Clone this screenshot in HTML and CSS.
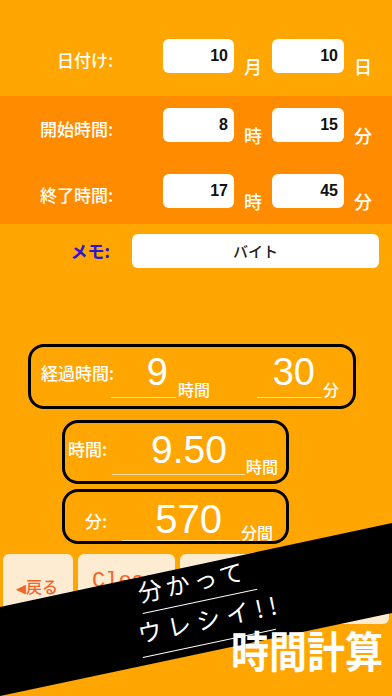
FILE: index.html
```html
<!DOCTYPE html>
<html lang="ja">
<head>
<meta charset="utf-8">
<title>時間計算</title>
<link rel="stylesheet" href="styles.css">
</head>
<body>
<div class="screen">
  <section class="group first">
    <div class="row">
      <div class="label">日付け:</div>
      <div class="box b1">10</div>
      <div class="unit">月</div>
      <div class="box b2">10</div>
      <div class="unit">日</div>
    </div>
  </section>
  <section class="group band">
    <div class="row">
      <div class="label">開始時間:</div>
      <div class="box b1">8</div>
      <div class="unit">時</div>
      <div class="box b2">15</div>
      <div class="unit">分</div>
    </div>
    <div class="row">
      <div class="label">終了時間:</div>
      <div class="box b1">17</div>
      <div class="unit">時</div>
      <div class="box b2">45</div>
      <div class="unit">分</div>
    </div>
  </section>
  <div class="memo-row">
    <div class="memo-label">メモ:</div>
    <div class="memo-box">バイト</div>
  </div>

  <div class="results">
    <div class="result r1">
      <div class="rlabel">経過時間:</div>
      <div class="field f1">9</div>
      <div class="runit u1">時間</div>
      <div class="field f2">30</div>
      <div class="runit u2">分</div>
    </div>
    <div class="result r2">
      <div class="rlabel">時間:</div>
      <div class="field f3">9.50</div>
      <div class="runit">時間</div>
    </div>
    <div class="result r3">
      <div class="rlabel">分:</div>
      <div class="field f4">570</div>
      <div class="runit">分間</div>
    </div>
  </div>

  <div class="buttons">
    <div class="btn back"><span class="tri">◀</span>戻る</div>
    <div class="btn clear">Clear</div>
    <div class="btn third"></div>
    <div class="btn fourth"></div>
  </div>

  <div class="stripe"></div>
  <div class="catch">
    <div class="l1">分かって</div>
    <div class="l2">ウレシイ!!</div>
  </div>
  <div class="title">時間計算</div>
</div>
</body>
</html>
```

FILE: styles.css
```css
html, body {
  margin: 0;
  padding: 0;
}
body {
  background: #ffa602;
  font-family: "Noto Sans CJK JP", "Noto Sans", sans-serif;
}
.screen {
  position: relative;
  width: 392px;
  height: 696px;
  overflow: hidden;
  background: #ffa602;
}
.group.first {
  padding: 39px 0 23px;
}
.group.band {
  background: #ff8c00;
  padding: 12px 0 16px;
  display: flex;
  flex-direction: column;
  gap: 32px;
}
.row {
  display: flex;
  height: 34px;
}
.label {
  width: 113px;
  text-align: right;
  color: #fff;
  font-size: 17px;
  font-weight: 500;
  line-height: 34px;
  padding-top: 4px;
  box-sizing: border-box;
  white-space: nowrap;
}
.box {
  background: #fff;
  border-radius: 6px;
  height: 34px;
  box-sizing: border-box;
  text-align: right;
  padding-right: 6px;
  font-family: "Liberation Sans", Arial, sans-serif;
  font-weight: 700;
  font-size: 16px;
  line-height: 34px;
  color: #111;
}
.b1 {
  margin-left: 50px;
  width: 71px;
}
.b2 {
  width: 72px;
}
.unit {
  width: 38px;
  text-align: center;
  color: #fff;
  font-size: 18px;
  font-weight: 500;
  line-height: 18px;
  align-self: flex-end;
  margin-bottom: -2px;
}
.memo-row {
  display: flex;
  margin-top: 10px;
  height: 34px;
}
.memo-label {
  width: 110px;
  text-align: right;
  color: #2b14d6;
  font-size: 17px;
  font-weight: 700;
  line-height: 34px;
}
.memo-box {
  margin-left: 22px;
  width: 247px;
  background: #fff;
  border-radius: 6px;
  text-align: center;
  font-size: 15px;
  font-weight: 500;
  line-height: 34px;
  color: #222;
}
.results {
  margin-top: 76px;
}
.result {
  display: flex;
  align-items: flex-end;
  border: 3px solid #000;
  border-radius: 16px;
  box-sizing: border-box;
  color: #fff;
}
.r1 {
  margin-left: 28px;
  width: 328px;
  height: 65px;
  padding-bottom: 8px;
}
.r2 {
  margin-left: 62px;
  margin-top: 11px;
  width: 227px;
  height: 64px;
  padding-bottom: 6px;
}
.r3 {
  margin-left: 62px;
  margin-top: 5px;
  width: 227px;
  height: 55px;
  padding-bottom: 0;
}
.rlabel {
  align-self: center;
  font-size: 17px;
  font-weight: 500;
  line-height: 20px;
  box-sizing: border-box;
  white-space: nowrap;
}
.r1 .rlabel {
  width: 80px;
  padding-left: 10px;
}
.r2 .rlabel, .r3 .rlabel {
  width: 42px;
  text-align: right;
}
.r3 .rlabel {
  margin-top: 8px;
}
.field {
  font-family: "Liberation Sans", Arial, sans-serif;
  font-size: 38px;
  line-height: 40px;
  text-align: right;
  border-bottom: 1px solid #ffe2a8;
  box-sizing: content-box;
}
.f1 {
  width: 57px;
  padding-right: 8px;
  padding-bottom: 5px;
}
.f2 {
  margin-left: 47px;
  width: 58px;
  padding-right: 7px;
  padding-bottom: 5px;
}
.f3 {
  margin-left: 5px;
  width: 115px;
  padding-right: 18px;
  padding-bottom: 4px;
  font-size: 39px;
}
.f4 {
  margin-left: 15px;
  width: 100px;
  padding-right: 18px;
  padding-bottom: 1px;
  font-size: 40px;
}
.runit {
  font-size: 16px;
  font-weight: 500;
  line-height: 16px;
  margin-left: 1px;
  margin-bottom: 1px;
}
.u1 {
  margin-left: 2px;
}
.buttons {
  margin-top: 10px;
  display: flex;
  padding-left: 3px;
  gap: 5px;
}
.btn {
  height: 70px;
  background: #fdebd2;
  border-radius: 6px;
  color: #f2652a;
  font-size: 16px;
  font-weight: 500;
  box-sizing: border-box;
  padding-top: 20px;
}
.back {
  width: 70px;
  padding-left: 13px;
}
.tri {
  font-family: "DejaVu Sans", sans-serif;
  font-size: 13px;
}
.clear {
  width: 97px;
  padding-left: 14px;
  font-family: "Liberation Mono", "DejaVu Sans Mono", monospace;
  font-size: 22px;
  padding-top: 15px;
}
.third {
  width: 100px;
}
.fourth {
  width: 104px;
}
.stripe {
  position: absolute;
  left: 0;
  top: 0;
  width: 392px;
  height: 696px;
  background: #000;
  clip-path: polygon(0 607px, 392px 523px, 392px 613px, 0 696px);
}
.catch {
  position: absolute;
  left: 143px;
  bottom: 38px;
  transform-origin: 0 100%;
  transform: rotate(-12deg);
  color: #fff;
  font-size: 24px;
  font-weight: 400;
}
.l1 {
  margin-left: 9px;
  width: 117px;
  border-bottom: 1.5px solid #fff;
  letter-spacing: 4px;
  line-height: 34px;
  padding-bottom: 4px;
  white-space: nowrap;
}
.l2 {
  width: 136px;
  border-bottom: 1.5px solid #fff;
  letter-spacing: 6px;
  line-height: 36px;
  padding-bottom: 6px;
  white-space: nowrap;
}
.title {
  position: absolute;
  right: 9px;
  top: 624px;
  color: #fff;
  font-size: 38px;
  font-weight: 700;
  line-height: 44px;
  transform: scaleY(1.15);
  transform-origin: 50% 0;
  white-space: nowrap;
}
```
